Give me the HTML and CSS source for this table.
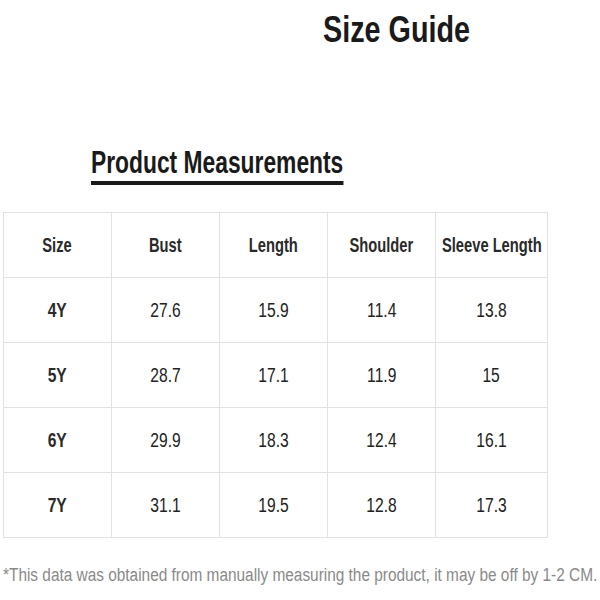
FILE: index.html
```html
<!DOCTYPE html>
<html>
<head>
<meta charset="utf-8">
<link rel="stylesheet" href="styles.css">
</head>
<body>
<div class="page">
  <h1 class="title">Size Guide</h1>
  <h2 class="subtitle">Product Measurements</h2>
  <table class="sizes">
    <tr class="head"><td><span>Size</span></td><td><span>Bust</span></td><td><span>Length</span></td><td><span>Shoulder</span></td><td><span>Sleeve Length</span></td></tr>
    <tr><td class="sz"><span>4Y</span></td><td><span>27.6</span></td><td><span>15.9</span></td><td><span>11.4</span></td><td><span>13.8</span></td></tr>
    <tr><td class="sz"><span>5Y</span></td><td><span>28.7</span></td><td><span>17.1</span></td><td><span>11.9</span></td><td><span>15</span></td></tr>
    <tr><td class="sz"><span>6Y</span></td><td><span>29.9</span></td><td><span>18.3</span></td><td><span>12.4</span></td><td><span>16.1</span></td></tr>
    <tr><td class="sz"><span>7Y</span></td><td><span>31.1</span></td><td><span>19.5</span></td><td><span>12.8</span></td><td><span>17.3</span></td></tr>
  </table>
  <div class="note-wrap"><p class="note">*This data was obtained from manually measuring the product, it may be off by 1-2 CM.</p></div>
</div>
</body>
</html>
```
FILE: styles.css
```css
html, body { margin: 0; padding: 0; background: #fff; }
.page { width: 600px; height: 600px; font-family: "Liberation Sans", Arial, sans-serif; color: #1e1e1e; overflow: hidden; }
.title { margin: 0 0 0 323px; padding-top: 10px; font-size: 37px; font-weight: bold; line-height: 40px; color: #1a1a1a; display: inline-block; transform: scaleX(0.777); transform-origin: left center; white-space: nowrap; }
.subtitle { margin: 96px 0 0 91px; display: inline-block; font-size: 31px; font-weight: bold; line-height: 34px; padding-bottom: 1px; border-bottom: 4px solid #1a1a1a; color: #1a1a1a; transform: scaleX(0.736); transform-origin: left center; white-space: nowrap; }
.sizes { margin: 27px 0 0 3px; border-collapse: collapse; table-layout: fixed; width: 543px; }
.sizes td { border: 1.5px solid #e2e2e2; width: 107px; height: 64px; padding: 0; text-align: center; font-size: 20px; color: #222; overflow: visible; white-space: nowrap; }
.sizes td span { display: inline-block; transform: scaleX(0.78); transform-origin: center; margin: 0 -30px; }
.sizes tr.head td span { transform: scaleX(0.735); }
.sizes tr.head td, .sizes td.sz { font-weight: bold; color: #2a2a2a; }
.sizes td:last-child { width: 111px; }
.note-wrap { width: 600px; overflow: hidden; margin-top: 27px; }
.note { margin: 0 0 0 3px; font-size: 18px; line-height: 20px; color: #8a8a8a; white-space: nowrap; display: inline-block; transform: scaleX(0.855); transform-origin: left center; }
```
